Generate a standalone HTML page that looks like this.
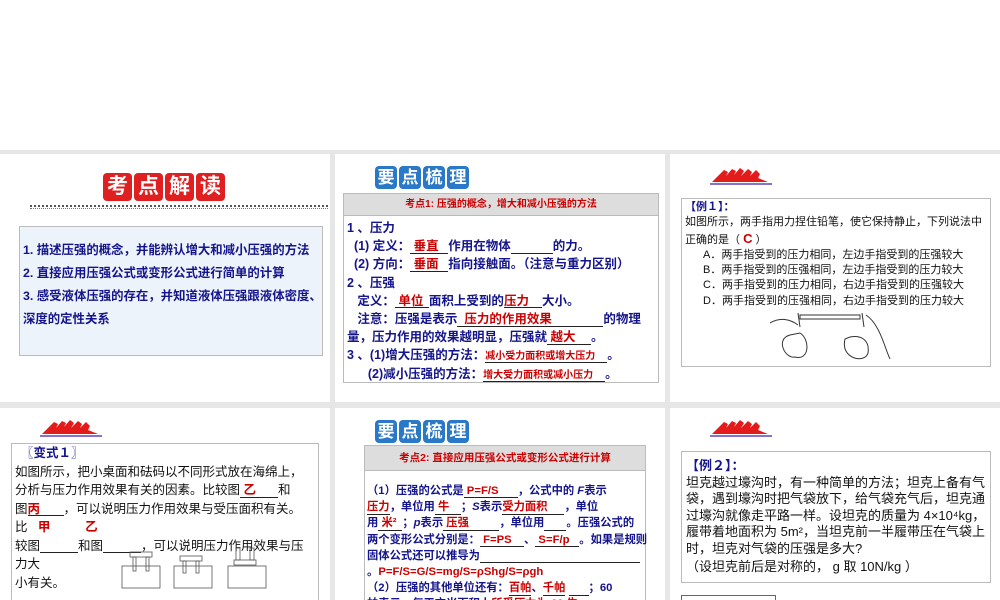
<!DOCTYPE html>
<html><head><meta charset="utf-8"><style>
*{margin:0;padding:0;box-sizing:border-box}
body{width:1000px;height:600px;overflow:hidden;background:#fff;font-family:"Liberation Sans","Noto Sans CJK SC",sans-serif;position:relative}
.bg{position:absolute;left:0;top:150px;width:1000px;height:450px;background:#e6e6e6}
.s{position:absolute;background:#fff;overflow:hidden}
.a{position:absolute}
.tile{display:inline-block;color:#fff;font-weight:bold;text-align:center;border-radius:4px;margin-right:2px}
.red{background:#e02020;width:29px;height:28px;font-size:21px;line-height:28px}
.blue{background:#2a78c8;width:22px;height:23px;font-size:17px;line-height:23px}
.nav{color:#14148c;font-weight:bold}
.r{color:#c00;font-weight:bold}
u{text-decoration:none;border-bottom:1px solid #222;display:inline-block;line-height:1}
.box{position:absolute;border:1px solid #bbb}
</style></head><body>
<div class="bg"></div>

<!-- slide 1 -->
<div class="s" style="left:0;top:154px;width:330px;height:248px">
 <div class="a" style="left:103px;top:19px"><span class="tile red">考</span><span class="tile red">点</span><span class="tile red">解</span><span class="tile red">读</span></div>
 <div class="a" style="left:30px;top:51px;width:298px;height:4px;border-top:2px dotted #555;border-bottom:1px dotted #777"></div>
 <div class="box" style="left:19px;top:72px;width:304px;height:130px;background:#edf3fb">
  <div class="nav" style="position:absolute;left:3px;top:12px;font-size:12.4px;line-height:23px;width:310px;white-space:nowrap">
   <div>1. 描述压强的概念，并能辨认增大和减小压强的方法</div>
   <div>2. 直接应用压强公式或变形公式进行简单的计算</div>
   <div>3. 感受液体压强的存在，并知道液体压强跟液体密度、</div>
   <div>深度的定性关系</div>
  </div>
 </div>
</div>

<!-- slide 2 -->
<div class="s" style="left:335px;top:154px;width:330px;height:248px">
 <div class="a" style="left:40px;top:12px"><span class="tile blue">要</span><span class="tile blue">点</span><span class="tile blue">梳</span><span class="tile blue">理</span></div>
 <div class="box" style="left:8px;top:39px;width:316px;height:190px">
  <div style="height:22px;background:#ddd;border-bottom:1px solid #bbb;text-align:center;font-size:10px;line-height:22px" class="r">考点1: 压强的概念，增大和减小压强的方法</div>
  <div class="nav" style="font-size:12.5px;line-height:18.2px;padding-left:3px;padding-top:3px;white-space:nowrap">
   <div>1 、压力</div>
   <div>&nbsp;&nbsp;(1) 定义：<u class="r" style="width:38px">&nbsp;垂直</u>作用在物体<u style="width:42px">&nbsp;</u>的力。</div>
   <div>&nbsp;&nbsp;(2) 方向：<u class="r" style="width:38px">&nbsp;垂面</u>指向接触面。（注意与重力区别）</div>
   <div>2 、压强</div>
   <div>&nbsp;&nbsp;&nbsp;定义：<u class="r" style="width:34px">&nbsp;单位</u>面积上受到的<u class="r" style="width:38px">压力</u>大小。</div>
   <div>&nbsp;&nbsp;&nbsp;注意：压强是表示<u class="r" style="width:146px">&nbsp;&nbsp;压力的作用效果</u>的物理</div>
   <div>量，压力作用的效果越明显，压强就<u class="r" style="width:44px">&nbsp;越大</u>。</div>
   <div>3 、(1)增大压强的方法：<u class="r" style="width:122px;font-size:10px">减小受力面积或增大压力</u>。</div>
   <div>&nbsp;&nbsp;&nbsp;&nbsp;&nbsp;&nbsp;(2)减小压强的方法：<u class="r" style="width:122px;font-size:10px">增大受力面积或减小压力</u>。</div>
  </div>
 </div>
</div>

<!-- slide 3 -->
<div class="s" style="left:670px;top:154px;width:330px;height:248px">
 <svg class="a" style="left:40px;top:12px" width="66" height="20" viewBox="0 0 66 20"><polygon points="2,16 14,4 18,6 16,10 22,3 26,5 24,9 30,2 34,5 31,10 38,3 42,6 40,10 46,4 50,8 48,12 58,16" fill="#e41b1b"/><line x1="0" y1="18" x2="62" y2="18" stroke="#6040c0" stroke-width="1.5"/></svg>
 <div class="box" style="left:11px;top:44px;width:310px;height:169px;font-size:11px;line-height:15.3px;padding:1px 3px;color:#111">
  <div class="nav">【例１】：</div>
  <div>如图所示，两手指用力捏住铅笔，使它保持静止，下列说法中<br>正确的是（ <b style="color:#c00;font-size:13px">C</b> ）</div>
  <div style="padding-left:18px;white-space:nowrap">A．两手指受到的压力相同，左边手指受到的压强较大<br>B．两手指受到的压强相同，左边手指受到的压力较大<br>C．两手指受到的压力相同，右边手指受到的压强较大<br>D．两手指受到的压强相同，右边手指受到的压力较大</div>
  <svg class="a" style="left:88px;top:110px" width="130" height="56" viewBox="0 0 130 56" fill="none" stroke="#333" stroke-width="1"><rect x="30" y="6" width="60" height="4"/><path d="M28 4 L30 18 M20 26 C5 30 15 50 25 48 C40 52 40 30 30 24 Z M0 14 C10 8 20 10 28 16"/><path d="M92 4 L94 18 M75 30 C70 50 95 55 98 44 C100 30 90 26 80 28 Z M96 6 C110 15 115 40 120 50"/></svg>
 </div>
</div>

<!-- slide 4 -->
<div class="s" style="left:0;top:408px;width:330px;height:192px">
 <svg class="a" style="left:40px;top:10px" width="66" height="20" viewBox="0 0 66 20"><polygon points="2,16 14,4 18,6 16,10 22,3 26,5 24,9 30,2 34,5 31,10 38,3 42,6 40,10 46,4 50,8 48,12 58,16" fill="#e41b1b"/><line x1="0" y1="18" x2="62" y2="18" stroke="#6040c0" stroke-width="1.5"/></svg>
 <div class="box" style="left:11px;top:35px;width:308px;height:160px;font-size:12.5px;line-height:18.5px;padding:0 3px;color:#111;white-space:nowrap">
  <div class="nav" style="padding-left:6px">〖变式１〗</div>
  <div>如图所示，把小桌面和砝码以不同形式放在海绵上，</div>
  <div>分析与压力作用效果有关的因素。比较图<u class="r" style="width:38px">&nbsp;乙</u>和</div>
  <div>图<u class="r" style="width:36px">丙</u>，可以说明压力作用效果与受压面积有关。</div>
  <div>比&nbsp;&nbsp;&nbsp;<span class="r">甲</span>&nbsp;&nbsp;&nbsp;&nbsp;&nbsp;&nbsp;&nbsp;&nbsp;&nbsp;&nbsp;<span class="r">乙</span></div>
  <div>较图<u style="width:38px">&nbsp;</u>和图<u style="width:38px">&nbsp;</u>，可以说明压力作用效果与压</div>
  <div>力大</div>
  <div>小有关。</div>
  <svg class="a" style="left:108px;top:102px" width="160" height="48" viewBox="0 0 160 48" fill="none" stroke="#555" stroke-width="0.8"><rect x="2" y="20" width="38" height="22"/><rect x="10" y="6" width="22" height="5"/><rect x="13" y="11" width="3" height="14"/><rect x="26" y="11" width="3" height="14"/><rect x="54" y="20" width="38" height="22"/><rect x="60" y="10" width="22" height="5"/><rect x="63" y="15" width="3" height="12"/><rect x="76" y="15" width="3" height="12"/><rect x="108" y="20" width="38" height="22"/><rect x="114" y="14" width="22" height="5"/><rect x="116" y="2" width="4" height="12"/><rect x="130" y="2" width="4" height="12"/></svg>
 </div>
</div>

<!-- slide 5 -->
<div class="s" style="left:335px;top:408px;width:330px;height:192px">
 <div class="a" style="left:40px;top:12px"><span class="tile blue">要</span><span class="tile blue">点</span><span class="tile blue">梳</span><span class="tile blue">理</span></div>
 <div class="box" style="left:29px;top:37px;width:282px;height:160px">
  <div style="height:25px;background:#ddd;border-bottom:1px solid #bbb;text-align:center;font-size:10.5px;line-height:25px" class="r">考点2: 直接应用压强公式或变形公式进行计算</div>
  <div class="nav" style="font-size:11.3px;line-height:16.2px;padding:12px 2px 0 2px;white-space:nowrap">
   <div>（1）压强的公式是<u class="r" style="width:54px">&nbsp;P=F/S</u>，公式中的 <i>F</i>表示</div>
   <div><u class="r">压力</u>，单位用<u class="r" style="width:26px">&nbsp;牛</u>；<i>S</i>表示<u class="r" style="width:62px">受力面积</u>，单位</div>
   <div>用<u class="r" style="width:24px">&nbsp;米²</u>；<i>p</i>表示<u class="r" style="width:56px">&nbsp;压强</u>，单位用<u style="width:22px">&nbsp;</u>。压强公式的</div>
   <div>两个变形公式分别是：<u class="r" style="width:44px">&nbsp;F=PS</u>、<u class="r" style="width:44px">&nbsp;S=F/p</u>。如果是规则</div>
   <div>固体公式还可以推导为<u style="width:160px">&nbsp;</u></div>
   <div>。<span class="r">P=F/S=G/S=mg/S=ρShg/S=ρgh</span></div>
   <div>（2）压强的其他单位还有：<u class="r">百帕</u>、<u class="r">千帕</u>&nbsp;<u style="width:20px">&nbsp;</u>；60</div>
   <div>帕表示，每平方米面积上<span class="r">所受压力为 60 牛</span>。</div>
  </div>
 </div>
</div>

<!-- slide 6 -->
<div class="s" style="left:670px;top:408px;width:330px;height:192px">
 <svg class="a" style="left:40px;top:10px" width="66" height="20" viewBox="0 0 66 20"><polygon points="2,16 14,4 18,6 16,10 22,3 26,5 24,9 30,2 34,5 31,10 38,3 42,6 40,10 46,4 50,8 48,12 58,16" fill="#e41b1b"/><line x1="0" y1="18" x2="62" y2="18" stroke="#6040c0" stroke-width="1.5"/></svg>
 <div class="box" style="left:11px;top:43px;width:310px;height:132px;font-size:13px;line-height:16.5px;padding:6px 4px;color:#111">
  <div class="nav">【例２】：</div>
  <div>坦克越过壕沟时，有一种简单的方法；坦克上备有气袋，遇到壕沟时把气袋放下，给气袋充气后，坦克通过壕沟就像走平路一样。设坦克的质量为 4×10⁴kg，履带着地面积为 5m²，当坦克前一半履带压在气袋上时，坦克对气袋的压强是多大?</div>
  <div style="margin-top:2px">（设坦克前后是对称的， g 取 10N/kg ）</div>
 </div>
 <div class="box" style="left:11px;top:187px;width:95px;height:10px;border-color:#666"></div>
</div>
</body></html>
